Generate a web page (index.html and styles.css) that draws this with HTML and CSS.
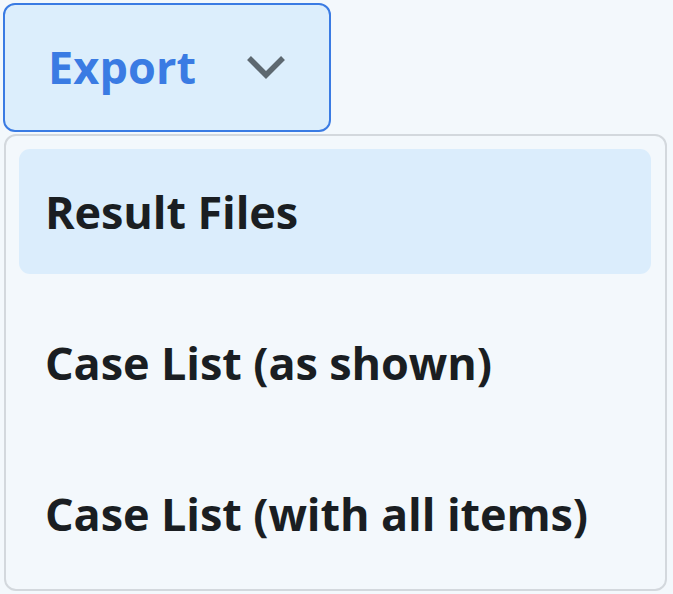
FILE: index.html
```html
<!DOCTYPE html>
<html>
<head>
<meta charset="utf-8">
<link rel="stylesheet" href="styles.css">
</head>
<body>
<div class="wrap">
  <button class="export-btn">
    <span class="export-label">Export</span>
    <svg class="chev" width="40" height="26" viewBox="0 0 40 26"><path d="M3 4 L20 21 L37 4" fill="none" stroke="#5d6870" stroke-width="5.5" stroke-linecap="butt" stroke-linejoin="miter"/></svg>
  </button>
  <div class="menu">
    <div class="item active">Result Files</div>
    <div class="item">Case List (as shown)</div>
    <div class="item">Case List (with all items)</div>
  </div>
</div>
</body>
</html>
```
FILE: styles.css
```css
html, body {
  margin: 0;
  padding: 0;
  background: #f3f8fc;
}
body {
  font-family: "Open Sans", "Noto Sans", sans-serif;
}
.wrap {
  padding: 3px 0 0 3px;
  display: flex;
  flex-direction: column;
  align-items: flex-start;
}
.export-btn {
  box-sizing: border-box;
  width: 328px;
  height: 129px;
  border: 2.5px solid #3a7be3;
  border-radius: 12px;
  background: #dceefc;
  display: flex;
  align-items: center;
  padding: 0 0 0 43px;
  margin: 0;
  font-family: inherit;
  cursor: pointer;
}
.export-label {
  font-size: 45px;
  font-weight: 700;
  color: #3a7be3;
  letter-spacing: 0.1px;
  margin-top: -3px;
}
.chev {
  margin-left: 50px;
  margin-top: -2px;
}
.menu {
  box-sizing: border-box;
  margin-top: 2px;
  margin-left: 1px;
  width: 663px;
  height: 457px;
  border: 2px solid #d3d8dd;
  border-radius: 12px;
  background: #f3f8fc;
  padding: 13px 14px 13px 13px;
  display: flex;
  flex-direction: column;
  gap: 26px;
}
.item {
  height: 125px;
  border-radius: 11px;
  display: flex;
  align-items: center;
  padding-left: 26px;
  font-size: 45px;
  font-weight: 700;
  color: #1a1e22;
  flex-shrink: 0;
  letter-spacing: -0.1px;
}
.item.active {
  background: #dbedfc;
}
```
